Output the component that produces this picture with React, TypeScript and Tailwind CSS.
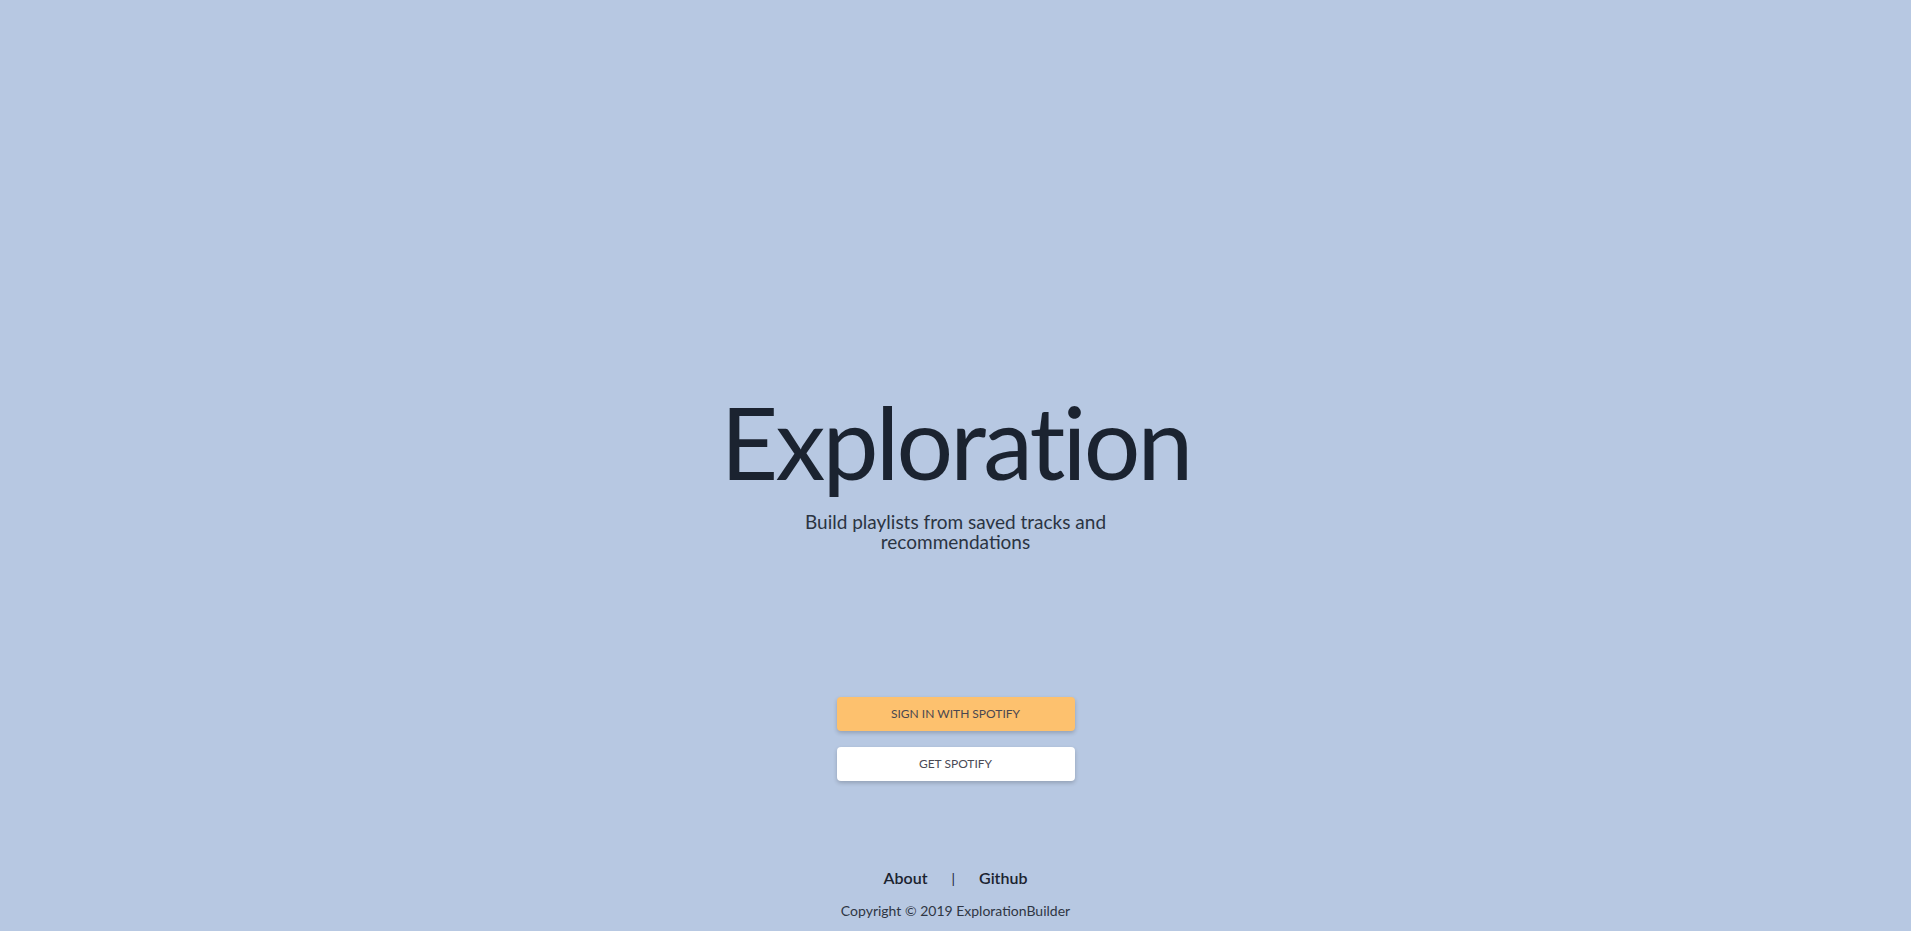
export default function App() {
  return (
    <div className="min-h-screen w-full bg-[#b7c8e2] font-['Lato','Open_Sans',sans-serif] text-[#1c2431]">
      <div className="flex flex-col items-center pt-[391px]">
        {/* Hero */}
        <h1 className="text-[100px] leading-none font-normal tracking-[-2.8px] text-[#1b2330]">
          Exploration
        </h1>
        <p className="mt-[21px] w-[320px] text-center text-[19px] leading-[20px] text-[#2b3442]">
          Build playlists from saved tracks and recommendations
        </p>

        {/* Actions */}
        <div className="mt-[145px] flex flex-col gap-4">
          <button className="h-[34px] w-[238px] rounded-[4px] bg-[#fdc16e] text-[12px] uppercase text-[#4a4750] shadow-[0_2px_4px_rgba(0,0,0,0.2)]">
            Sign in with Spotify
          </button>
          <button className="h-[34px] w-[238px] rounded-[4px] bg-white text-[12px] uppercase text-[#4a4a55] shadow-[0_2px_4px_rgba(0,0,0,0.2)]">
            Get Spotify
          </button>
        </div>

        {/* Footer */}
        <div className="mt-[85px] flex items-center text-[16px] font-semibold text-[#1b2330]">
          <a className="px-6">About</a>
          <span className="text-[14px] font-normal text-[#1b2330]">|</span>
          <a className="px-6">Github</a>
        </div>
        <p className="mt-[10px] text-[14px] text-[#2f3644]">
          Copyright © 2019 ExplorationBuilder
        </p>
      </div>
    </div>
  )
}
